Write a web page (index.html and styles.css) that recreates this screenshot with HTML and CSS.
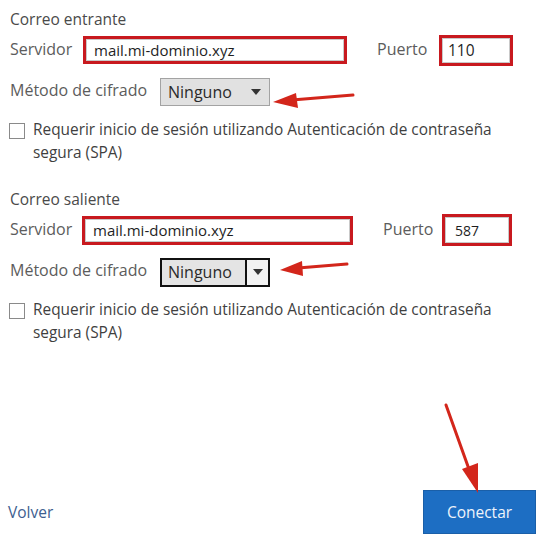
FILE: index.html
```html
<!DOCTYPE html>
<html lang="es">
<head>
<meta charset="utf-8">
<title>Configuración de correo</title>
<link rel="stylesheet" href="styles.css">
</head>
<body>
<main class="page">
  <section class="group">
    <h2 class="title">Correo entrante</h2>
    <div class="row server-row">
      <span class="lbl lbl-server">Servidor</span>
      <div class="field server">mail.mi-dominio.xyz</div>
      <span class="lbl lbl-port">Puerto</span>
      <div class="field port">110</div>
    </div>
    <div class="row enc-row">
      <span class="lbl lbl-enc">Método de cifrado</span>
      <div class="select">
        <span class="select-text">Ninguno</span>
        <span class="select-btn"><span class="caret"></span></span>
      </div>
    </div>
    <div class="check-row">
      <span class="box"></span>
      <p class="check-text">Requerir inicio de sesión utilizando Autenticación de contraseña<br>segura (SPA)</p>
    </div>
  </section>

  <section class="group out">
    <h2 class="title">Correo saliente</h2>
    <div class="row server-row">
      <span class="lbl lbl-server">Servidor</span>
      <div class="field server">mail.mi-dominio.xyz</div>
      <span class="lbl lbl-port">Puerto</span>
      <div class="field port">587</div>
    </div>
    <div class="row enc-row">
      <span class="lbl lbl-enc">Método de cifrado</span>
      <div class="select focused">
        <span class="select-text">Ninguno</span>
        <span class="select-btn"><span class="caret"></span></span>
      </div>
    </div>
    <div class="check-row">
      <span class="box"></span>
      <p class="check-text">Requerir inicio de sesión utilizando Autenticación de contraseña<br>segura (SPA)</p>
    </div>
  </section>

  <footer class="footer">
    <a class="back" href="#">Volver</a>
    <button class="connect" type="button">Conectar</button>
  </footer>

  <svg class="annotations" width="546" height="548" viewBox="0 0 546 548" aria-hidden="true">
    <g stroke="#d3261b" stroke-width="3" stroke-linecap="round" fill="none">
      <line x1="353" y1="95" x2="292" y2="100"/>
      <line x1="347" y1="264" x2="298" y2="268"/>
      <line x1="446" y1="405" x2="470" y2="472"/>
    </g>
    <g fill="#d3261b">
      <polygon points="273,102 296,93 298,108"/>
      <polygon points="280,270 302,261 303,276"/>
      <polygon points="478,493 462,469 478,463"/>
    </g>
  </svg>
</main>
</body>
</html>
```
FILE: styles.css
```css
html, body {
  margin: 0;
  padding: 0;
  background: #ffffff;
}

body {
  font-family: "Open Sans", "Noto Sans", "DejaVu Sans", sans-serif;
  color: #555555;
}

.page {
  position: relative;
  width: 546px;
  height: 548px;
  box-sizing: border-box;
  padding-left: 10px;
  display: flex;
  flex-direction: column;
}

.group {
  height: 180px;
  box-sizing: border-box;
  padding-top: 9px;
  display: flex;
  flex-direction: column;
}

.title {
  margin: 0;
  font-size: 15.5px;
  font-weight: 400;
  line-height: 20px;
  height: 20px;
  color: #4a4a4a;
}

.row {
  display: flex;
  align-items: center;
}

.lbl {
  font-size: 16px;
  color: #5c5c5c;
  white-space: nowrap;
}

.server-row {
  margin-top: 5px;
  height: 32px;
}

.lbl-server {
  width: 73px;
  padding-bottom: 3px;
}

.field {
  box-sizing: border-box;
  border: 3px solid #c8191f;
  box-shadow: inset 0 0 0 1px #c9c9c9;
  background: #ffffff;
  color: #1f1f1f;
  font-size: 15px;
  display: flex;
  align-items: center;
}

.server {
  width: 264px;
  height: 28px;
  padding-left: 8px;
}

.lbl-port {
  margin-left: 30px;
  width: 62px;
  padding-bottom: 3px;
}

.port {
  width: 74px;
  height: 31px;
  padding-left: 6px;
  font-size: 15.5px;
}

.out .server {
  margin-left: -1px;
  width: 271px;
  height: 29px;
}

.out .lbl-port {
  margin-left: 30px;
  width: 59px;
}

.out .port {
  width: 70px;
  height: 32px;
  padding-left: 10px;
  font-size: 14px;
}

.enc-row {
  margin-top: 12px;
  height: 28px;
}

.lbl-enc {
  width: 150px;
  padding-bottom: 5px;
}

.select {
  box-sizing: border-box;
  width: 110px;
  height: 28px;
  border: 1px solid #a3a3a3;
  background: #e1e1e1;
  display: flex;
  align-items: center;
  color: #2a2a2a;
}

.select-text {
  font-size: 16px;
  padding-left: 7px;
  flex: 1;
}

.select-btn {
  width: 22px;
  height: 100%;
  display: flex;
  align-items: center;
  justify-content: center;
  margin-right: 2px;
}

.caret {
  width: 0;
  height: 0;
  border-left: 5px solid transparent;
  border-right: 5px solid transparent;
  border-top: 6px solid #333333;
}

.select.focused {
  height: 29px;
  border: 2px solid #111111;
  background: #e4e4e4;
}

.select.focused .select-text {
  padding-left: 6px;
}

.select.focused .select-btn {
  margin-right: 0;
  width: 21px;
  border-left: 2px solid #111111;
  background: #f2f2f2;
}

.check-row {
  margin-top: 12px;
  display: flex;
  align-items: flex-start;
  margin-left: -1px;
}

.box {
  flex: none;
  width: 14px;
  height: 14px;
  border: 1px solid #8a8a8a;
  margin-top: 5px;
  background: #ffffff;
}

.check-text {
  margin: 0 0 0 8px;
  font-size: 15.4px;
  line-height: 23px;
  color: #3f3f3f;
}

.footer {
  margin-top: auto;
  margin-bottom: 14px;
  padding-right: 10px;
  display: flex;
  justify-content: space-between;
  align-items: center;
}

.back {
  margin-left: -2px;
  font-size: 15.5px;
  color: #3d5e8f;
  text-decoration: none;
  font-weight: 500;
}

.connect {
  width: 113px;
  height: 44px;
  border: 1px solid #1a5fa8;
  background: #1d6ec3;
  color: #eef4fb;
  font-family: inherit;
  font-size: 15.5px;
  font-weight: 500;
  padding: 0;
}

.annotations {
  position: absolute;
  left: 0;
  top: 0;
  pointer-events: none;
}
```
